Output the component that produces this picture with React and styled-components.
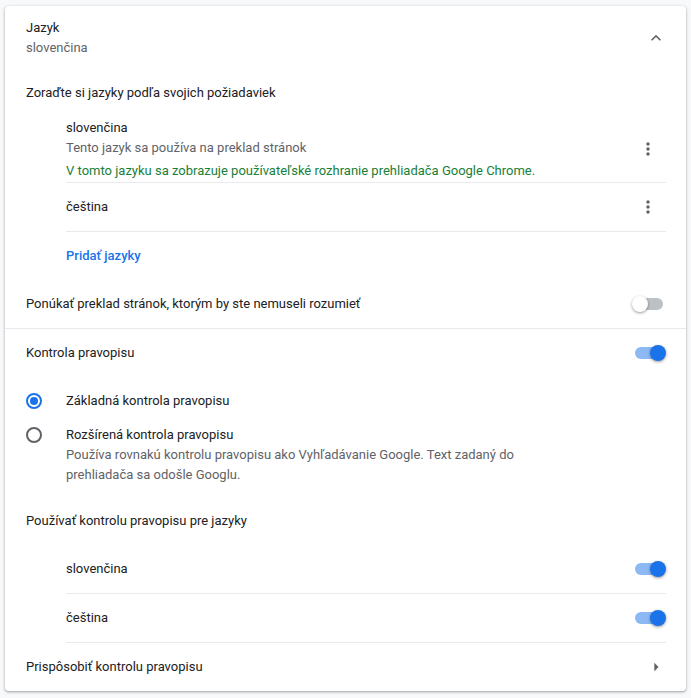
import React from "react";
import styled, { createGlobalStyle } from "styled-components";

const Global = createGlobalStyle`
  html, body { margin: 0; padding: 0; background: #f8f9fa; }
  body { font-family: Roboto, "Noto Sans", Arial, sans-serif; font-size: 13px; color: #202124; -webkit-font-smoothing: antialiased; }
`;

const Page = styled.div`
  padding: 6px 5px 6px 5px;
  width: 681px;
`;

const Card = styled.section`
  background: #fff;
  border-radius: 4px;
  box-shadow: 0 1px 2px 0 rgba(60, 64, 67, 0.3), 0 1px 3px 1px rgba(60, 64, 67, 0.15);
  overflow: hidden;
`;

const Row = styled.div`
  display: flex;
  align-items: center;
  min-height: ${(p) => p.$h || 48}px;
  padding: 0 20px 0 ${(p) => (p.$indent ? 61 : 21)}px;
  box-sizing: border-box;
  border-bottom: ${(p) => (p.$divider ? "1px solid #e8eaed" : "none")};
`;

const Inset = styled.div`
  margin: 0 20px 0 61px;
`;

const InsetItem = styled.div`
  display: flex;
  align-items: center;
  min-height: ${(p) => p.$h || 48}px;
  border-bottom: 1px solid #e8eaed;
  box-sizing: border-box;
`;

const Grow = styled.div`
  flex: 1;
  display: flex;
  flex-direction: column;
  line-height: 20px;
`;

const Primary = styled.div`
  color: #202124;
  line-height: 20px;
`;

const Secondary = styled.div`
  color: #5f6368;
  line-height: 20px;
`;

const Green = styled.div`
  color: #188038;
  line-height: 20px;
  margin-top: 3px;
`;

const Link = styled.div`
  color: #1a73e8;
  font-weight: 500;
  line-height: 20px;
`;

const IconBox = styled.div`
  width: ${(p) => p.$w || 20}px;
  height: 36px;
  display: flex;
  align-items: center;
  justify-content: center;
  color: #5f6368;
  flex-shrink: 0;
`;

const ToggleWrap = styled.div`
  position: relative;
  width: 34px;
  height: 12px;
  flex-shrink: 0;
`;

const ToggleBar = styled.div`
  position: absolute;
  left: 3px;
  top: 0;
  width: 28px;
  height: 12px;
  border-radius: 6px;
  background: ${(p) => (p.$on ? "#1a73e8" : "#bdc1c6")};
  opacity: ${(p) => (p.$on ? 0.5 : 1)};
`;

const ToggleKnob = styled.div`
  position: absolute;
  top: -2px;
  left: ${(p) => (p.$on ? 18 : 0)}px;
  width: 16px;
  height: 16px;
  border-radius: 50%;
  background: ${(p) => (p.$on ? "#1a73e8" : "#ffffff")};
  box-shadow: 0 1px 3px 0 rgba(0, 0, 0, 0.4);
`;

const RadioGroup = styled.div`
  padding: 0 20px 12px 21px;
`;

const RadioRow = styled.div`
  display: grid;
  grid-template-columns: 40px 1fr;
  align-items: ${(p) => (p.$top ? "start" : "center")};
  min-height: ${(p) => (p.$top ? 0 : 48)}px;
`;

const RadioCircle = styled.div`
  width: 16px;
  height: 16px;
  box-sizing: border-box;
  border-radius: 50%;
  border: 2px solid ${(p) => (p.$on ? "#1a73e8" : "#5f6368")};
  display: flex;
  align-items: center;
  justify-content: center;
  margin-top: ${(p) => (p.$top ? 2 : 0)}px;
  &::after {
    content: "";
    width: 8px;
    height: 8px;
    border-radius: 50%;
    background: ${(p) => (p.$on ? "#1a73e8" : "transparent")};
  }
`;

const RadioText = styled.div`
  max-width: 460px;
  line-height: 20px;
`;

const Toggle = ({ on }) => (
  <ToggleWrap>
    <ToggleBar $on={on} />
    <ToggleKnob $on={on} />
  </ToggleWrap>
);

const MoreVert = () => (
  <IconBox $w={36}>
    <svg width="20" height="20" viewBox="0 0 24 24" fill="currentColor">
      <path d="M12 8c1.1 0 2-.9 2-2s-.9-2-2-2-2 .9-2 2 .9 2 2 2zm0 2c-1.1 0-2 .9-2 2s.9 2 2 2 2-.9 2-2-.9-2-2-2zm0 6c-1.1 0-2 .9-2 2s.9 2 2 2 2-.9 2-2-.9-2-2-2z" />
    </svg>
  </IconBox>
);

export default function App() {
  return (
    <>
      <Global />
      <Page>
        <Card>
          <Row $h={64}>
            <Grow>
              <Primary>Jazyk</Primary>
              <Secondary>slovenčina</Secondary>
            </Grow>
            <IconBox>
              <svg width="20" height="20" viewBox="0 0 24 24" fill="currentColor">
                <path d="M12 8l-6 6 1.41 1.41L12 10.83l4.59 4.58L18 14z" />
              </svg>
            </IconBox>
          </Row>
          <Row $h={46}>
            <Primary>Zoraďte si jazyky podľa svojich požiadaviek</Primary>
          </Row>
          <Inset>
            <InsetItem $h={67}>
              <Grow>
                <Primary>slovenčina</Primary>
                <Secondary>Tento jazyk sa používa na preklad stránok</Secondary>
                <Green>V tomto jazyku sa zobrazuje používateľské rozhranie prehliadača Google Chrome.</Green>
              </Grow>
              <MoreVert />
            </InsetItem>
            <InsetItem $h={49}>
              <Grow>
                <Primary>čeština</Primary>
              </Grow>
              <MoreVert />
            </InsetItem>
          </Inset>
          <Row $indent>
            <Link>Pridať jazyky</Link>
          </Row>
          <Row $divider $h={49}>
            <Grow>
              <Primary>Ponúkať preklad stránok, ktorým by ste nemuseli rozumieť</Primary>
            </Grow>
            <Toggle on={false} />
          </Row>
          <Row>
            <Grow>
              <Primary>Kontrola pravopisu</Primary>
            </Grow>
            <Toggle on />
          </Row>
          <RadioGroup>
            <RadioRow>
              <RadioCircle $on />
              <RadioText>Základná kontrola pravopisu</RadioText>
            </RadioRow>
            <RadioRow $top>
              <RadioCircle $top />
              <RadioText>
                <Primary>Rozšírená kontrola pravopisu</Primary>
                <Secondary>
                  Používa rovnakú kontrolu pravopisu ako Vyhľadávanie Google. Text zadaný do prehliadača sa odošle Googlu.
                </Secondary>
              </RadioText>
            </RadioRow>
          </RadioGroup>
          <Row>
            <Primary>Používať kontrolu pravopisu pre jazyky</Primary>
          </Row>
          <Inset>
            <InsetItem $h={49}>
              <Grow>
                <Primary>slovenčina</Primary>
              </Grow>
              <Toggle on />
            </InsetItem>
            <InsetItem $h={49}>
              <Grow>
                <Primary>čeština</Primary>
              </Grow>
              <Toggle on />
            </InsetItem>
          </Inset>
          <Row>
            <Grow>
              <Primary>Prispôsobiť kontrolu pravopisu</Primary>
            </Grow>
            <IconBox>
              <svg width="20" height="20" viewBox="0 0 24 24" fill="currentColor">
                <path d="M10 17l5-5-5-5v10z" />
              </svg>
            </IconBox>
          </Row>
        </Card>
      </Page>
    </>
  );
}
